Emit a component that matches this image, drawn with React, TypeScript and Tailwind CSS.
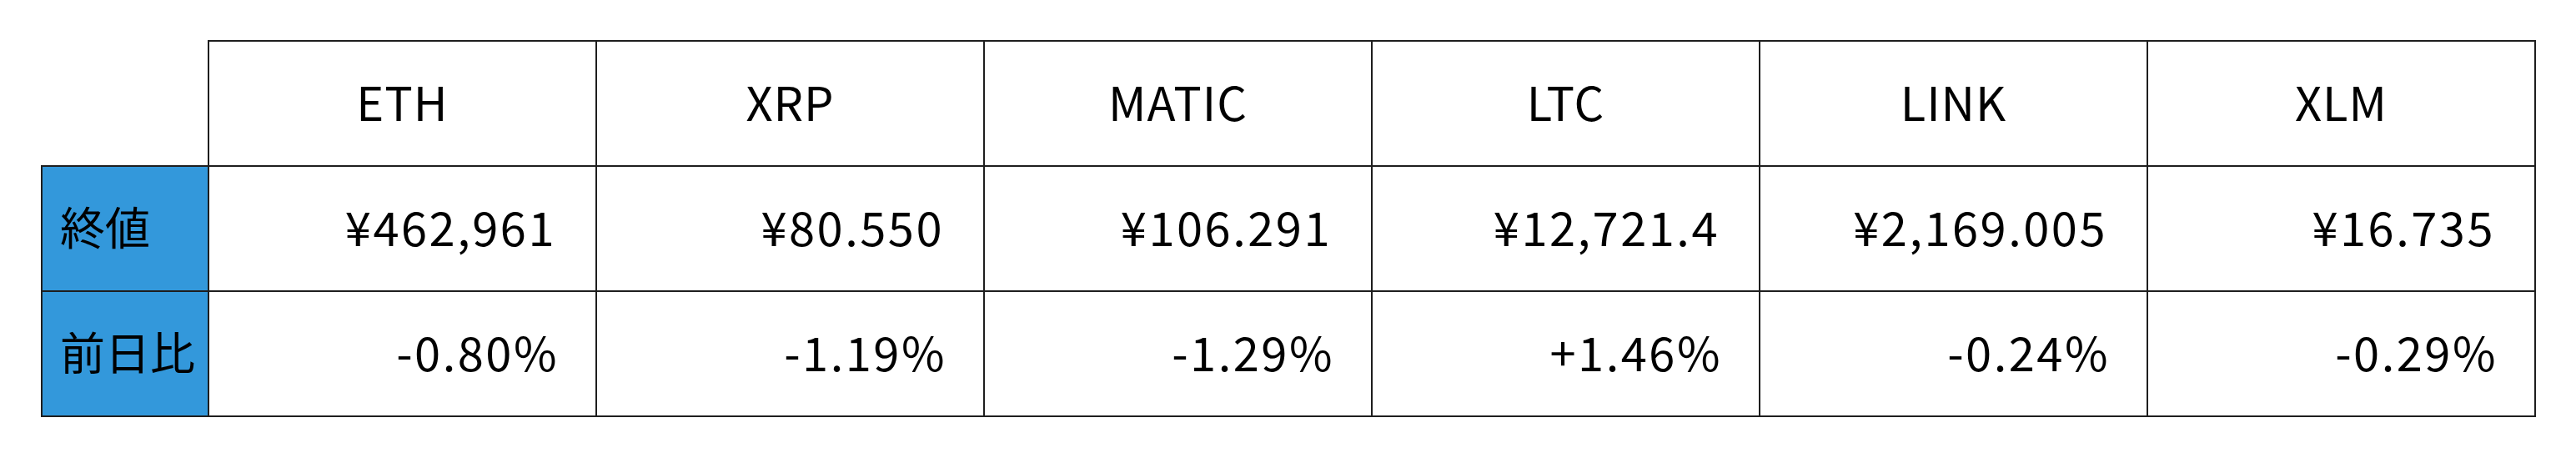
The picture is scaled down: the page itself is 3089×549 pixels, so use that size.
import React from "react";

const cols = ["ETH", "XRP", "MATIC", "LTC", "LINK", "XLM"];
const closes = ["¥462,961", "¥80.550", "¥106.291", "¥12,721.4", "¥2,169.005", "¥16.735"];
const changes = ["-0.80%", "-1.19%", "-1.29%", "+1.46%", "-0.24%", "-0.29%"];

const cell = "border-2 border-[#1e1e1e] p-0";

export default function App() {
  return (
    <div
      className="w-[3089px] h-[549px] bg-white pt-[48px] pl-[49px]"
      style={{ fontFamily: '"Noto Sans CJK JP", "Noto Sans", sans-serif' }}
    >
      <table className="border-collapse text-black leading-none">
        <colgroup>
          <col className="w-[200px]" />
          {cols.map((c) => (
            <col key={c} className="w-[465px]" />
          ))}
        </colgroup>
        <tbody>
          <tr className="h-[150px]">
            <td className="p-0"></td>
            {cols.map((c) => (
              <td key={c} className={`${cell} text-center text-[56px] tracking-[1px] pb-[6px]`}>
                {c}
              </td>
            ))}
          </tr>
          <tr className="h-[150px]">
            <td className={`${cell} bg-[#3398db] pl-[21px] text-left text-[54px] pb-[6px]`}>終値</td>
            {closes.map((v, i) => (
              <td key={i} className={`${cell} text-right pr-[47px] text-[56px] tracking-[2.5px] pb-[6px]`}>
                {v}
              </td>
            ))}
          </tr>
          <tr className="h-[150px]">
            <td className={`${cell} bg-[#3398db] pl-[21px] text-left text-[54px] pb-[6px]`}>前日比</td>
            {changes.map((v, i) => (
              <td key={i} className={`${cell} text-right pr-[44px] text-[56px] tracking-[2.5px] pb-[6px]`}>
                {v}
              </td>
            ))}
          </tr>
        </tbody>
      </table>
    </div>
  );
}
